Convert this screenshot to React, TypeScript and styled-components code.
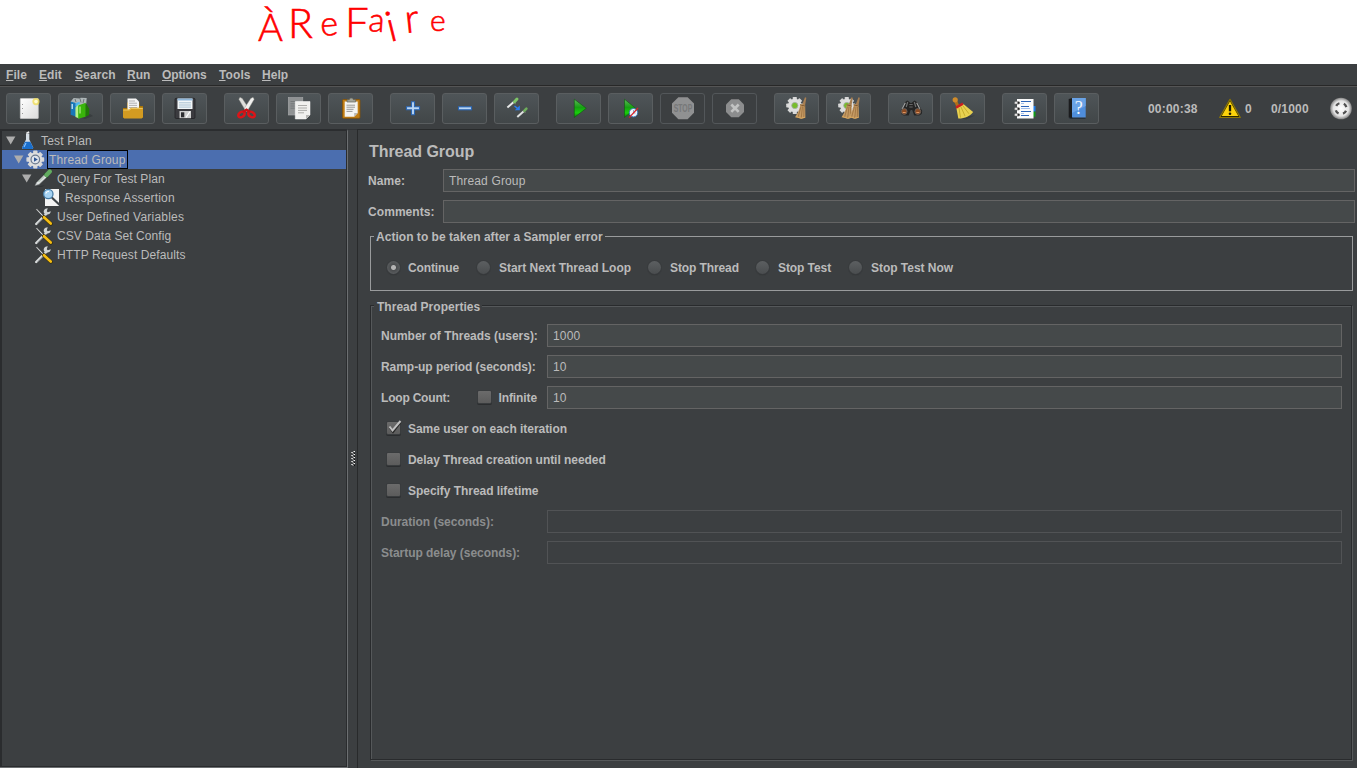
import React from 'react';
import styled, { createGlobalStyle } from 'styled-components';

const GlobalStyle = createGlobalStyle`
  * { box-sizing: border-box; }
  html, body { margin: 0; padding: 0; background: #fff; overflow: hidden; }
  body { font-family: "Liberation Sans", Arial, sans-serif; font-size: 12px; color: #bbb; }
  svg { display: block; flex: none; }
`;

const Page = styled.div`
  width: 1357px;
  height: 768px;
  display: flex;
  flex-direction: column;
  background: #fff;
`;

const NoteStrip = styled.div`
  height: 64px;
  flex: none;
  padding-left: 240px;
`;

const Window = styled.div`
  flex: 1;
  min-height: 0;
  display: flex;
  flex-direction: column;
  background: #3c3f41;
`;

const MenuBar = styled.div`
  height: 22px;
  flex: none;
  display: flex;
  border-bottom: 1px solid #282828;
  padding-left: 6px;
`;

const MenuItem = styled.div<{ $w: number; $ls: number }>`
  width: ${p => p.$w}px;
  line-height: 23px;
  height: 21px;
  font-weight: bold;
  letter-spacing: ${p => p.$ls}px;
  white-space: nowrap;
  &::first-letter { text-decoration: underline; }
`;

const Toolbar = styled.div`
  height: 43px;
  flex: none;
  display: flex;
  border-top: 1px solid #555;
  padding: 6px 0 0 6px;
`;

const ButtonGroup = styled.div`
  display: flex;
  gap: 7px;
  margin-right: 17px;
`;

const ToolButton = styled.button<{ $off?: boolean }>`
  width: 45px;
  height: 31px;
  padding: 0;
  border: 1px solid ${p => (p.$off ? '#53575a' : '#5a5e60')};
  border-radius: 3px;
  background: ${p => (p.$off ? 'transparent' : 'linear-gradient(#4f5558, #414648)')};
  svg { margin: -1px; }
`;

const Status = styled.div`
  display: flex;
  align-items: center;
  height: 31px;
  margin-left: 32px;
  font-weight: bold;
`;

const StatusText = styled.span<{ $w: number; $ls?: number }>`
  width: ${p => p.$w}px;
  letter-spacing: ${p => p.$ls ?? 0}px;
  white-space: nowrap;
`;

const Body = styled.div`
  flex: 1;
  min-height: 0;
  display: flex;
`;

const TreePane = styled.div`
  width: 348px;
  flex: none;
  border-style: solid;
  border-width: 2px 1px 1px 0;
  border-color: #2b2d2f #6c6f71 #6c6f71 #2b2d2f;
`;

const TreeInner = styled.div`
  height: 100%;
  border-style: solid;
  border-color: #2a2c2e;
  border-width: 0 1px 1px 2px;
`;

const TreeRow = styled.div<{ $depth: number; $selected?: boolean }>`
  height: 19px;
  display: flex;
  align-items: center;
  padding-left: ${p => 4 + p.$depth * 8}px;
  background: ${p => (p.$selected ? '#4b6eaf' : 'transparent')};
`;

const TreeText = styled.span<{ $selected?: boolean; $ls: number }>`
  height: 19px;
  line-height: 19px;
  margin-left: 1px;
  padding: 0 1px;
  border: 1px solid ${p => (p.$selected ? '#000' : 'transparent')};
  letter-spacing: ${p => p.$ls}px;
  white-space: nowrap;
`;

const Splitter = styled.div`
  width: 9px;
  flex: none;
  display: flex;
  align-items: center;
  padding: 20px 0 0 3px;
  border-top: 1px solid #323436;
`;

const Main = styled.div`
  flex: 1;
  min-width: 0;
  display: flex;
  flex-direction: column;
  border: solid #282a2b;
  border-width: 1px 0 0 1px;
  padding: 11px 2px 8px 10px;
`;

const Title = styled.h1`
  margin: 0 0 8px 1px;
  height: 20px;
  line-height: 21px;
  font-size: 16px;
  font-weight: bold;
  letter-spacing: -0.05px;
`;

const FieldRow = styled.label<{ $labelWidth: number }>`
  display: grid;
  grid-template-columns: ${p => p.$labelWidth}px 1fr;
  height: 23px;
  margin-bottom: 8px;
`;

const LabelText = styled.span<{ $ls?: number; $off?: boolean; $high?: boolean }>`
  height: 23px;
  line-height: ${p => (p.$high ? 23 : 25)}px;
  font-weight: bold;
  letter-spacing: ${p => p.$ls ?? -0.02}px;
  color: ${p => (p.$off ? '#8b8d8e' : '#bbb')};
  white-space: nowrap;
`;

const Input = styled.input<{ $ls?: number }>`
  width: 100%;
  height: 23px;
  padding: 0 5px;
  border: 1px solid #646464;
  border-radius: 0;
  outline: none;
  background: #45494a;
  color: #bbb;
  font: 12px "Liberation Sans", Arial, sans-serif;
  letter-spacing: ${p => p.$ls ?? 0.15}px;
  &:disabled { background: transparent; border-color: #515355; }
`;

const Fieldset = styled.section<{ $bright?: boolean }>`
  display: flex;
  flex-direction: column;
  width: 983px;
  margin-left: 2px;
  border: 1px solid ${p => (p.$bright ? '#999b9c' : '#292b2d')};
  box-shadow: ${p => (p.$bright ? 'none' : 'inset 1px 1px 0 #55585a, 1px 1px 0 #55585a')};
`;

const ActionBox = styled(Fieldset)`
  height: 55px;
  margin-top: 5px;
`;

const PropsBox = styled(Fieldset)`
  width: 982px;
  flex: 1;
  margin-top: 14px;
  padding-right: 9px;
`;

const Legend = styled.h2<{ $ls: number; $top: number; $w: number; $pad: number }>`
  margin: ${p => p.$top}px 0 0 3px;
  width: ${p => p.$w}px;
  height: 16px;
  line-height: 16px;
  padding-left: ${p => p.$pad}px;
  font-size: 12px;
  letter-spacing: ${p => p.$ls}px;
  background: #3c3f41;
  white-space: nowrap;
`;

const RadioRow = styled.div`
  display: flex;
  margin: 12px 0 0 16px;
`;

const Option = styled.label<{ $w?: number; $gap?: number }>`
  display: flex;
  width: ${p => (p.$w ? p.$w + 'px' : 'auto')};
  gap: ${p => p.$gap ?? 8}px;
  height: 23px;
`;

const RadioDot = styled.span<{ $on?: boolean }>`
  width: 13px;
  height: 13px;
  margin-top: 4px;
  flex: none;
  border-radius: 50%;
  background: ${p => (p.$on
    ? 'radial-gradient(circle at 50% 50%, #b4b4b4 0 2px, #4a4c4e 3px, #575a5c 6px)'
    : 'linear-gradient(#5c5f61, #4a4d4f)')};
  box-shadow: 0 0 0 1px #393c3e, 0 1px 1px 0 #26282a;
`;

const CheckSquare = styled.span`
  width: 13px;
  height: 12px;
  margin-top: 5px;
  flex: none;
  border-radius: 1px;
  background: linear-gradient(#6b6b6b, #5c5c5c);
  box-shadow: 0 0 0 1px #393c3e, 0 1px 0 1px #2b2d2f;
  svg { margin: -3px 0 0 0; overflow: visible; }
`;

const LoopLabel = styled.span`
  display: flex;
  justify-content: space-between;
  padding-right: 10px;
`;

const PropsForm = styled.div`
  display: flex;
  flex-direction: column;
  margin: 9px 0 0 10px;
`;

const CheckRow = styled.div`
  height: 31px;
  padding-left: 6px;
`;

/* ---------- toolbar drawings ---------- */

const Art = ({ children }: { children: React.ReactNode }) => (
  <svg width="45" height="31" viewBox="0 0 45 31">{children}</svg>
);

const Gear = ({ cx, cy, r, core }: { cx: number; cy: number; r: number; core: string }) => (
  <g transform={`translate(${cx} ${cy})`}>
    {[0, 45, 90, 135].map(a => (
      <rect key={a} x={-r * 0.24} y={-r} width={r * 0.48} height={r * 2} rx="0.7" fill="#d8d8d8" transform={`rotate(${a})`} />
    ))}
    <circle r={r * 0.78} fill="#dedede" />
    <circle r={r * 0.36} fill={core} stroke="#a3aaa6" strokeWidth="0.8" />
  </g>
);

const Broom = ({ x }: { x: number }) => (
  <g transform={`translate(${x} 0)`}>
    <path d="M11 4.200l1.300.6-1.300 8-3-.8z" fill="#a87f52" />
    <path d="M6.300 11l4.900 1.300.2 12.400-3.700 1.100-6.700-1.600c2.700-4.300 4.800-7.500 5.300-13.200z" fill="#c59a63" />
    <path d="M7 13.500l-3 11M8.500 13.500l-1.300 11.500M10 14l-.2 11" stroke="#94683a" strokeWidth=".7" fill="none" />
    <path d="M2 23.500l5 1.700 4-1" stroke="#dba95e" strokeWidth="1" fill="none" />
    <path d="M6.200 11.800l4.900 1.300" stroke="#7d5730" strokeWidth="1" />
  </g>
);

const octagon = (cx: number, cy: number, r: number) => {
  const k = r * 0.42;
  return [[-k, -r], [k, -r], [r, -k], [r, k], [k, r], [-k, r], [-r, k], [-r, -k]]
    .map(([a, b]) => `${cx + a},${cy + b}`).join(' ');
};

const NewArt = () => (
  <Art>
    <defs><linearGradient id="pg" x1="0" y1="0" x2="1" y2="1"><stop offset="0" stopColor="#fff" /><stop offset="1" stopColor="#dcdcdc" /></linearGradient></defs>
    <rect x="14.300" y="5.500" width="18" height="20" rx=".6" fill="url(#pg)" stroke="#cfcfcf" strokeWidth=".6" />
    <path d="M16.500 11v1M16.500 15v1M16.500 20v1" stroke="#999" />
    <circle cx="30" cy="8.600" r="3.600" fill="#f0dc4e" opacity=".75" />
    <circle cx="30" cy="8.600" r="1.800" fill="#fffbd0" />
  </Art>
);

const TemplatesArt = () => (
  <Art>
    <path d="M20 24l12-3 3 2-8 3z" fill="#2d3133" opacity=".5" />
    <path d="M12.700 8.500l3-3.500 6 .5 1-.8 6 .3-.5 6-13 3z" fill="#aeb6b8" />
    <path d="M17 6l1 3M22 5.500l1 4M26 6l-1 4" stroke="#6f7779" strokeWidth="1" />
    <path d="M12.700 8.500l5 1.500v13.500l-5-1.800z" fill="#1878b8" />
    <path d="M17.700 10l4-1.200v13.500l-4 1.200z" fill="#4cb6ee" />
    <path d="M14.200 11v5" stroke="#d9f0fc" strokeWidth="1.200" />
    <path d="M17.500 14.500l3.700-3.500v14.500l-3.700-1.500z" fill="#b8f08a" />
    <path d="M20.200 12.500l7.500-2.800v14l-7.500 2z" fill="#39b50a" />
    <path d="M27.700 9.700l3.600 6.300-.2 6-3.400 1.700z" fill="#1f7a06" />
    <path d="M22 13.500v7" stroke="#caf7a5" strokeWidth="1" />
  </Art>
);

const OpenArt = () => (
  <Art>
    <path d="M13 15h4V9.500h12.500V13H33v12H13z" fill="#a87408" />
    <path d="M17.500 5.400h8.500l3 3.200v9H17.500z" fill="#f4f4f4" />
    <path d="M19 8h6M19 10.200h8M19 12.400h8M19 14.500h8" stroke="#a8a8a8" strokeWidth=".9" />
    <path d="M13 16.500h6l2-1.700h12V24l-1.300 1.400H14.200L13 24z" fill="#d39b21" />
    <path d="M13.300 17h6l2-1.600h11.400" stroke="#f8d572" strokeWidth=".8" fill="none" />
  </Art>
);

const SaveArt = () => (
  <Art>
    <rect x="13" y="5.300" width="20" height="20.200" rx="1.200" fill="#3b3b3f" stroke="#1d1d1f" strokeWidth=".7" />
    <rect x="15.500" y="5.500" width="15" height="10.500" fill="#f2f6f8" />
    <rect x="15.500" y="5.500" width="15" height="2" fill="#8fb6d8" />
    <path d="M17 9.800h12M17 12h12M17 14.100h12" stroke="#98b4c8" strokeWidth=".8" />
    <rect x="17.500" y="18" width="11.500" height="7.200" fill="#cfcfcf" />
    <rect x="19" y="19.300" width="3.300" height="5" fill="#2d2d30" />
    <path d="M24 24.500l4-6" stroke="#fff" strokeWidth="1.200" />
  </Art>
);

const CutArt = () => (
  <Art>
    <path d="M14.800 6.200l1.200-2 2.300 1.300 6.200 9.500-.5 3-2 .4z" fill="#dededb" stroke="#8d8d89" strokeWidth=".4" />
    <path d="M30.200 6.200l-1.200-2-2.300 1.300-6.200 9.500.5 3 2 .4z" fill="#f1f1ef" stroke="#8d8d89" strokeWidth=".4" />
    <ellipse cx="17.500" cy="21.500" rx="3.500" ry="2.500" fill="none" stroke="#dd1418" strokeWidth="2.500" transform="rotate(-35 17.500 21.500)" />
    <ellipse cx="27.500" cy="21.500" rx="3.500" ry="2.500" fill="none" stroke="#dd1418" strokeWidth="2.500" transform="rotate(35 27.500 21.500)" />
    <path d="M19 19l3.500-2.200L26 19" stroke="#c81115" strokeWidth="2.600" fill="none" />
  </Art>
);

const CopyArt = () => (
  <Art>
    <rect x="12.300" y="4.500" width="14.500" height="17.500" fill="#8f9293" stroke="#a7a9aa" strokeWidth=".6" />
    <path d="M14.500 8.500h6M14.500 10.800h5M14.500 13h5M14.500 15.200h5" stroke="#6e7273" strokeWidth=".8" />
    <path d="M19.300 8.500h14.700v13.500l-4 4H19.300z" fill="#f1f1ef" stroke="#fff" strokeWidth=".5" />
    <path d="M22 12.500h9M22 15h9M22 17.400h9M22 19.800h6" stroke="#a5a5a3" strokeWidth=".9" />
    <path d="M34 22h-4v4z" fill="#b6b6b4" />
  </Art>
);

const PasteArt = () => (
  <Art>
    <rect x="14.500" y="6.500" width="17.500" height="18.800" rx="1" fill="#c07d14" stroke="#855307" strokeWidth=".8" />
    <path d="M16.700 8.500h13v11.500l-3.500 3.800h-9.500z" fill="#f4f4f2" />
    <path d="M18.500 12.200h8.500M18.500 14.200h8.500M18.500 16.300h7M18.500 18.400h6" stroke="#8c8c8a" strokeWidth=".9" />
    <path d="M29.700 20h-3.500v3.800z" fill="#b9b9b6" />
    <path d="M19 9V6.700h2.200l1-1.600h2.200l1 1.600h2.300V9z" fill="#a5a69c" stroke="#62645c" strokeWidth=".7" />
  </Art>
);

const PlusArt = () => (
  <Art><path d="M21.500 8.800h3v5h5v3h-5v5h-3v-5h-5v-3h5z" fill="#b9d6f4" stroke="#2a66b4" strokeWidth="1.100" /></Art>
);

const MinusArt = () => (
  <Art><rect x="16.500" y="13.800" width="13" height="3" fill="#b9d6f4" stroke="#2a66b4" strokeWidth="1.100" /></Art>
);

const ToggleArt = () => (
  <Art>
    <path d="M13.400 14.500L20 8.700" stroke="#e7e9e9" strokeWidth="2" />
    <path d="M19.500 8.700l2.200 2.300" stroke="#6c7d62" strokeWidth="1.200" />
    <path d="M20.500 8.700l2.500-2.700" stroke="#7fc568" strokeWidth="3" strokeLinecap="round" />
    <path d="M23.300 24L30 18" stroke="#dfe1e1" strokeWidth="2" />
    <path d="M29.500 17.700l2 2.100" stroke="#6c7d62" strokeWidth="1.200" />
    <path d="M30.500 17.700l1.900-2" stroke="#6fae5c" strokeWidth="2.600" strokeLinecap="round" />
    <path d="M20.500 13l3 2.300" stroke="#2a7df0" strokeWidth="1.500" />
    <path d="M25.800 12.600v4.700h-5z" fill="#2a7df0" />
  </Art>
);

const GreenGradient = () => (
  <defs><linearGradient id="gr" x1="0" y1="0" x2="0" y2="1"><stop offset="0" stopColor="#5db85a" /><stop offset=".45" stopColor="#16a012" /><stop offset=".75" stopColor="#19d00c" /><stop offset="1" stopColor="#0c7008" /></linearGradient></defs>
);

const RunArt = () => (
  <Art><GreenGradient /><path d="M18.300 6.200l12 9.100-12 9.200z" fill="url(#gr)" stroke="#0d5a0d" strokeWidth=".6" /></Art>
);

const RunNoTimersArt = () => (
  <Art>
    <GreenGradient />
    <path d="M16.500 6.200l11.200 9.100-11.200 9.200z" fill="url(#gr)" stroke="#0d5a0d" strokeWidth=".6" />
    <circle cx="25.500" cy="19.700" r="4.200" fill="#eef5fb" stroke="#3b78b6" strokeWidth="1" />
    <path d="M25.500 17v3h2" stroke="#7d9cba" strokeWidth=".8" fill="none" />
    <path d="M21.200 24.600l8.800-9.600" stroke="#d8232a" strokeWidth="1.300" />
  </Art>
);

const StopArt = () => (
  <Art>
    <polygon points={octagon(23, 15.200, 11)} fill="#909192" />
    <text x="23" y="19" textAnchor="middle" fontSize="10.500" fontWeight="bold" fill="#777879" textLength="18.500" lengthAdjust="spacingAndGlyphs" fontFamily="Liberation Sans, sans-serif">STOP</text>
  </Art>
);

const ShutdownArt = () => (
  <Art>
    <polygon points={octagon(23, 15.200, 9)} fill="#8c8d8e" />
    <path d="M19.300 11.500l7.400 7.400M26.700 11.500l-7.400 7.400" stroke="#c2c3c3" strokeWidth="2.600" />
  </Art>
);

const ClearArt = () => (
  <Art><Gear cx={20.800} cy={12.500} r={8.600} core="#77bd2a" /><Broom x={20} /></Art>
);

const ClearAllArt = () => (
  <Art><Gear cx={20.800} cy={12.500} r={8.600} core="#77bd2a" /><Broom x={14.500} /><Broom x={21.500} /></Art>
);

const SearchArt = () => (
  <Art>
    <path d="M16.500 9.500l3-2 3 2.500h1l3-2.500 3 2 4.700 8.500-.5 3-2.500 1.500h-5l-2-5.500h-1.500l-2 5.500h-5l-2.500-1.500-.5-3z" fill="#242424" />
    <path d="M17.300 9.800l-3.200 6.200M28.700 9.800l3.200 6.200" stroke="#a0a2a2" strokeWidth="1.200" />
    <path d="M19.700 9l-1.500 5M26.300 9l1.500 5" stroke="#6d6f6f" strokeWidth="1.200" />
    <circle cx="16.200" cy="18.500" r="2.900" fill="#8a4a22" stroke="#666" strokeWidth=".8" />
    <circle cx="29.800" cy="18.500" r="2.900" fill="#8a4a22" stroke="#666" strokeWidth=".8" />
    <path d="M14.700 19.500h3M28.300 19.500h3" stroke="#df9560" strokeWidth="1.200" />
    <path d="M21.300 11.500h3.400M21.300 14h3.400" stroke="#666" strokeWidth="1" />
  </Art>
);

const ResetArt = () => (
  <Art>
    <path d="M18 24l8 2.500 9-4z" fill="#2d3133" opacity=".5" />
    <path d="M15 6.500l2.500 6" stroke="#b06f19" strokeWidth="3.200" strokeLinecap="round" />
    <circle cx="15.200" cy="6.800" r="2.600" fill="#d08b2a" />
    <path d="M16.300 14.500l6.800-3.800 10 8.300c-3 4-7.500 6.300-14.800 6.600z" fill="#e8d150" />
    <path d="M19 15l1.500 9.500M21 14l4 9M23 13l6 7.800" stroke="#b79c1c" strokeWidth=".7" />
    <path d="M16 14.600l7-4" stroke="#cc1f1f" strokeWidth="2.600" />
  </Art>
);

const FunctionArt = () => (
  <Art>
    <rect x="30.500" y="13" width="3" height="5.500" fill="#1f7dea" />
    <rect x="30.500" y="18.700" width="3" height="5" fill="#109a17" />
    <rect x="15" y="6" width="16.500" height="19.500" fill="#fcfcfc" />
    <path d="M19 8.500h10M19 13.500h8M19 18.500h10M19 22.500h8" stroke="#2d64b8" strokeWidth="1" />
    <path d="M19 10.500h3M19 15.500h9M19 20.500h3" stroke="#8aaee8" strokeWidth=".8" />
    {[8.500, 14.500, 20.500].map(y => (
      <g key={y}><rect x="12.500" y={y} width="5" height="2.600" rx="1.200" fill="#e8e8e8" stroke="#6a6a6a" strokeWidth=".5" /><rect x="15.500" y={y + .3} width="2" height="2" fill="#222" /></g>
    ))}
  </Art>
);

const HelpArt = () => (
  <Art>
    <path d="M14.700 6l4-1v20.500l-4-1z" fill="#1b1c1e" />
    <rect x="18" y="5" width="13.700" height="19.500" fill="#4f8edc" />
    <path d="M18 5h13.700v8L18 20z" fill="#6aa3e6" />
    <path d="M15.500 25.300h16" stroke="#1d2a38" strokeWidth=".9" />
    <text x="24.800" y="20.800" textAnchor="middle" fontSize="18" fill="#f4f8fd" fontFamily="Liberation Serif, serif">?</text>
  </Art>
);

const WarningIcon = () => (
  <svg width="26" height="22" viewBox="0 0 26 22">
    <path d="M11 1.300L21.300 19.500H.7z" fill="#2c2700" stroke="#8b7607" strokeWidth="1.200" strokeLinejoin="round" />
    <path d="M11 3.200l8.300 14.900H2.700z" fill="#fcd20a" />
    <path d="M11 7v6.300" stroke="#1c1a00" strokeWidth="2.300" />
    <circle cx="11" cy="15.800" r="1.300" fill="#1c1a00" />
  </svg>
);

const IdleIcon = () => (
  <svg width="22" height="24" viewBox="0 0 22 24">
    <defs><radialGradient id="idle"><stop offset="0" stopColor="#fff" /><stop offset=".7" stopColor="#e4e4e4" /><stop offset="1" stopColor="#858585" /></radialGradient></defs>
    <circle cx="11" cy="11.500" r="10.800" fill="url(#idle)" />
    <circle cx="11" cy="11.500" r="5.500" fill="none" stroke="#505050" strokeWidth="2.300" strokeDasharray="4 4.640" strokeDashoffset="-2.320" />
  </svg>
);

/* ---------- tree drawings ---------- */

const Arrow = styled.span<{ $hidden?: boolean }>`
  width: 10px;
  margin-right: 2px;
  visibility: ${p => (p.$hidden ? 'hidden' : 'visible')};
`;

const Expander = ({ hidden }: { hidden?: boolean }) => (
  <Arrow $hidden={hidden}><svg width="10" height="9" viewBox="0 0 10 9"><path d="M0 .5h9.400L4.700 8.500z" fill="#adadad" /></svg></Arrow>
);

const TreeArt = ({ kind }: { kind: string }) => (
  <svg width="20" height="19" viewBox="0 0 20 19">
    {kind === 'flask' && <>
      <path d="M8 2.500h3.300v6l4 8.300-.7 1.200H4.700L4 16.800l4-8.300z" fill="#d5dde4" />
      <path d="M7 10.800h5.300l3 6-.7 1.200H4.700L4 16.800z" fill="#1a6ecb" />
      <path d="M8 12l-2 4" stroke="#8cc4ff" strokeWidth="1.100" />
      <path d="M8.500 2.300l2.700-1.300" stroke="#e8e8e8" strokeWidth="1.500" />
    </>}
    {kind === 'gear' && <>
      <Gear cx={9.300} cy={9.500} r={8.900} core="#4d6c9c" />
      <circle cx="9.300" cy="9.500" r="4.300" fill="#dfe4ec" stroke="#6c7a8e" strokeWidth="1.200" />
      <path d="M8 7.200l3.800 2.300L8 11.800z" fill="#2f5591" />
    </>}
    {kind === 'pipette' && <>
      <path d="M1 17.500h7l3-1z" fill="#26292b" />
      <path d="M1 16.600l1.500-3L10.500 5.500l2.500 2.500-8 7.500z" fill="#dfe3e3" stroke="#7c8181" strokeWidth=".6" />
      <path d="M4.500 13l6-6" stroke="#8fa890" strokeWidth=".8" />
      <path d="M9.800 4.500l4.200 4.200" stroke="#27512a" strokeWidth="1.800" />
      <path d="M12.500 6l3.300-3.500" stroke="#62ac60" strokeWidth="4.200" strokeLinecap="round" />
    </>}
    {kind === 'lens' && <>
      <path d="M3 1h14v17H3z" fill="#f3f3f3" />
      <path d="M10.300 10l7.400 7" stroke="#3f4448" strokeWidth="2.200" strokeLinecap="round" />
      <circle cx="6.300" cy="6" r="4.700" fill="#a5d2f2" stroke="#477da7" strokeWidth="1.300" />
      <path d="M3.700 5.500c.5-1.500 1.800-2.200 3.300-2.200" stroke="#fff" strokeWidth="1.100" fill="none" />
    </>}
    {kind === 'tools' && <>
      <path d="M2.200 17l10-10" stroke="#d9dcdc" strokeWidth="2.400" strokeLinecap="round" />
      <path d="M3.500 16.800l9-9" stroke="#6e7475" strokeWidth=".6" />
      <path d="M16.800 4.300l-3 .9-1-1 .9-3c-3-.2-5 2.800-3.400 5.200 2.500 2.300 6.400 1 6.500-2.100z" fill="#d0d4d4" />
      <path d="M1.500 2l1.500-.3 7 7.300-1 1z" fill="#e6e9e9" stroke="#222" strokeWidth=".5" />
      <path d="M9.800 10l7 6.700" stroke="#2d2500" strokeWidth="3.600" strokeLinecap="round" />
      <path d="M10 10.200l6.700 6.300" stroke="#f5bd14" strokeWidth="2.700" strokeLinecap="round" />
    </>}
  </svg>
);

/* ---------- data ---------- */

const menus: [string, number, number][] = [
  ['File', 33, 0.05], ['Edit', 36, 0.05], ['Search', 52, 0.1], ['Run', 35, 0.05],
  ['Options', 57, -0.1], ['Tools', 43, 0.1], ['Help', 40, 0.05],
];

type Tool = { name: string; art: React.FC; off?: boolean };
const groups: Tool[][] = [
  [{ name: 'New', art: NewArt }, { name: 'Templates', art: TemplatesArt }, { name: 'Open', art: OpenArt }, { name: 'Save', art: SaveArt }],
  [{ name: 'Cut', art: CutArt }, { name: 'Copy', art: CopyArt }, { name: 'Paste', art: PasteArt }],
  [{ name: 'Expand All', art: PlusArt }, { name: 'Collapse All', art: MinusArt }, { name: 'Toggle', art: ToggleArt }],
  [{ name: 'Start', art: RunArt }, { name: 'Start no pauses', art: RunNoTimersArt }, { name: 'Stop', art: StopArt, off: true }, { name: 'Shutdown', art: ShutdownArt, off: true }],
  [{ name: 'Clear', art: ClearArt }, { name: 'Clear All', art: ClearAllArt }],
  [{ name: 'Search', art: SearchArt }, { name: 'Reset Search', art: ResetArt }],
  [{ name: 'Function Helper', art: FunctionArt }, { name: 'Help', art: HelpArt }],
];

type Node = { label: string; icon: string; depth: number; open?: boolean; selected?: boolean; ls: number };
const nodes: Node[] = [
  { label: 'Test Plan', icon: 'flask', depth: 0, open: true, ls: 0.17 },
  { label: 'Thread Group', icon: 'gear', depth: 1, open: true, selected: true, ls: 0.15 },
  { label: 'Query For Test Plan', icon: 'pipette', depth: 2, open: true, ls: 0.06 },
  { label: 'Response Assertion', icon: 'lens', depth: 3, ls: 0.17 },
  { label: 'User Defined Variables', icon: 'tools', depth: 2, ls: 0.21 },
  { label: 'CSV Data Set Config', icon: 'tools', depth: 2, ls: 0.08 },
  { label: 'HTTP Request Defaults', icon: 'tools', depth: 2, ls: 0.1 },
];

const actions: [string, number, number, number][] = [
  ['Continue', 90, -0.12, 8], ['Start Next Thread Loop', 171, -0.03, 9], ['Stop Thread', 108, -0.1, 9],
  ['Stop Test', 93, -0.08, 9], ['Stop Test Now', 120, -0.03, 9],
];

/* Pen note written above the window, one glyph at a time on a wavering line. */
const noteGlyphs: [string, number, number, number, number][] = [
  ['À', 258, 41, 38, 0],
  ['R', 288, 38, 41, 0],
  ['e', 321, 36, 34, -4],
  ['F', 345, 37, 42, 0],
  ['a', 368, 31, 33, 4],
  ['i', 390, 42, 42, -14],
  ['r', 406, 33, 40, -6],
  ['e', 430, 31, 30, 0],
];

const Note = () => (
  <svg width="240" height="64" viewBox="240 0 240 64">
    <text fill="#f00" stroke="#f00" strokeWidth=".6" fontFamily="Lato, sans-serif" fontWeight="300">
      {noteGlyphs.map(([ch, x, y, size, turn], i) => (
        <tspan key={i} x={x} y={y} fontSize={size} rotate={turn}>{ch}</tspan>
      ))}
    </text>
  </svg>
);

const Grip = () => (
  <svg width="5" height="16" viewBox="0 0 5 16">
    {[0, 3, 6, 9, 12].map(y => (
      <g key={y}>
        <rect x="2.500" y={y} width="1.500" height="1" fill="#eee" />
        <rect x=".3" y={y + 1} width="1.500" height="1" fill="#eee" />
        <rect x="1.500" y={y + 2} width="1" height="1" fill="#aaa" />
        <rect x="3" y={y + 2} width="1" height="1" fill="#111" />
      </g>
    ))}
  </svg>
);

export default function App() {
  return (
    <Page>
      <GlobalStyle />
      <NoteStrip><Note /></NoteStrip>
      <Window>
        <MenuBar>
          {menus.map(([name, w, ls]) => <MenuItem key={name} $w={w} $ls={ls}>{name}</MenuItem>)}
        </MenuBar>
        <Toolbar>
          {groups.map((group, i) => (
            <ButtonGroup key={i}>
              {group.map(({ name, art: Drawing, off }) => (
                <ToolButton key={name} aria-label={name} disabled={off} $off={off}><Drawing /></ToolButton>
              ))}
            </ButtonGroup>
          ))}
          <Status>
            <StatusText $w={71} $ls={0.2}>00:00:38</StatusText>
            <WarningIcon />
            <StatusText $w={26}>0</StatusText>
            <StatusText $w={59} $ls={0.17}>0/1000</StatusText>
            <IdleIcon />
          </Status>
        </Toolbar>
        <Body>
          <TreePane>
            <TreeInner>
              {nodes.map(n => (
                <TreeRow key={n.label} $depth={n.depth} $selected={n.selected}>
                  <Expander hidden={!n.open} />
                  <TreeArt kind={n.icon} />
                  <TreeText $selected={n.selected} $ls={n.ls}>{n.label}</TreeText>
                </TreeRow>
              ))}
            </TreeInner>
          </TreePane>
          <Splitter><Grip /></Splitter>
          <Main>
            <Title>Thread Group</Title>
            <FieldRow $labelWidth={75}><LabelText $ls={0.1}>Name:</LabelText><Input defaultValue="Thread Group" /></FieldRow>
            <FieldRow $labelWidth={75}><LabelText $ls={0.07}>Comments:</LabelText><Input /></FieldRow>
            <ActionBox $bright>
              <Legend $ls={0.03} $top={-8} $w={231} $pad={2}>Action to be taken after a Sampler error</Legend>
              <RadioRow>
                {actions.map(([name, w, ls, gap], i) => (
                  <Option key={name} $w={w} $gap={gap}><RadioDot $on={i === 0} /><LabelText $high $ls={ls}>{name}</LabelText></Option>
                ))}
              </RadioRow>
            </ActionBox>
            <PropsBox>
              <Legend $ls={0.03} $top={-7} $w={108} $pad={3}>Thread Properties</Legend>
              <PropsForm>
                <FieldRow $labelWidth={166}><LabelText>Number of Threads (users):</LabelText><Input defaultValue="1000" /></FieldRow>
                <FieldRow $labelWidth={166}><LabelText $ls={-0.05}>Ramp-up period (seconds):</LabelText><Input defaultValue="10" /></FieldRow>
                <FieldRow as="div" $labelWidth={166}>
                  <LoopLabel>
                    <LabelText $ls={-0.2}>Loop Count:</LabelText>
                    <Option $gap={7}><CheckSquare /><LabelText $ls={-0.1}>Infinite</LabelText></Option>
                  </LoopLabel>
                  <Input defaultValue="10" />
                </FieldRow>
                <CheckRow>
                  <Option>
                    <CheckSquare>
                      <svg width="15" height="15" viewBox="0 0 15 15">
                        <path d="M3 9l3 4L13.500 3.500" stroke="#2a2a2a" strokeWidth="2" fill="none" />
                        <path d="M2.500 7.500l3 4L13.500 2" stroke="#c0c0c0" strokeWidth="2" fill="none" />
                      </svg>
                    </CheckSquare>
                    <LabelText $ls={-0.04}>Same user on each iteration</LabelText>
                  </Option>
                </CheckRow>
                <CheckRow><Option><CheckSquare /><LabelText $ls={-0.05}>Delay Thread creation until needed</LabelText></Option></CheckRow>
                <CheckRow><Option><CheckSquare /><LabelText $ls={-0.04}>Specify Thread lifetime</LabelText></Option></CheckRow>
                <FieldRow $labelWidth={166}><LabelText $off>Duration (seconds):</LabelText><Input disabled /></FieldRow>
                <FieldRow $labelWidth={166}><LabelText $off $ls={-0.04}>Startup delay (seconds):</LabelText><Input disabled /></FieldRow>
              </PropsForm>
            </PropsBox>
          </Main>
        </Body>
      </Window>
    </Page>
  );
}
